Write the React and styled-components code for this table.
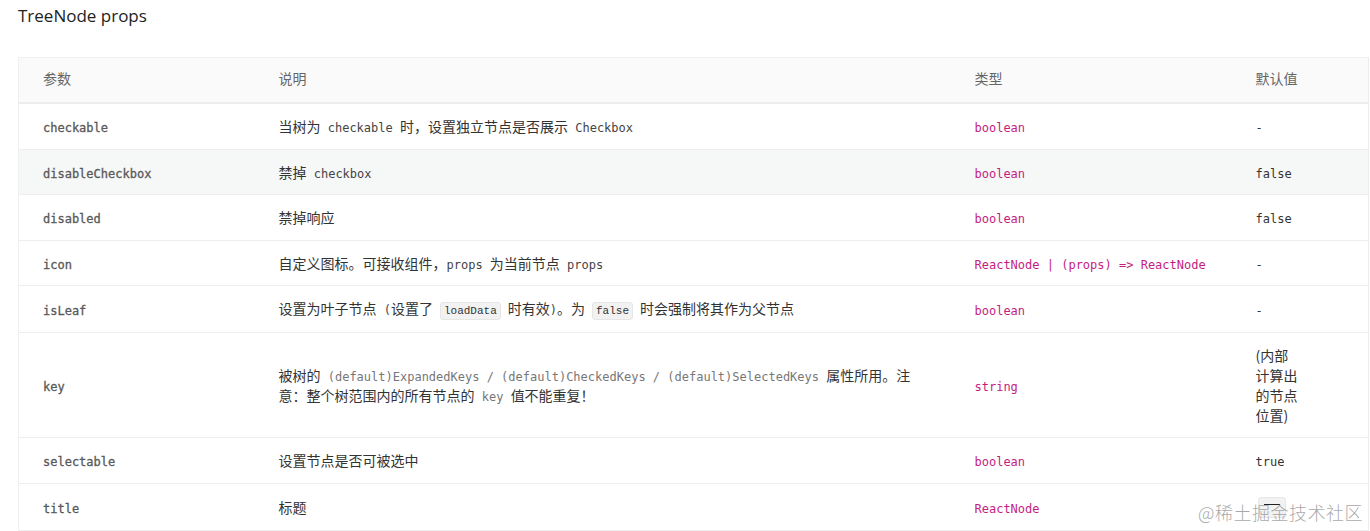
import React from "react";
import styled, { createGlobalStyle } from "styled-components";

const Global = createGlobalStyle`
  html, body { margin: 0; padding: 0; background: #fff; }
  body { font-family: "Noto Sans CJK SC", "Noto Sans", sans-serif; color: #333; }
`;

const Page = styled.div`
  position: relative;
  width: 1370px;
  height: 531px;
  overflow: hidden;
  padding: 0 1px 0 18px;
  box-sizing: border-box;
`;

const Title = styled.h3`
  margin: 0;
  padding-top: 4px;
  height: 53px;
  font-family: "Open Sans", "Noto Sans CJK SC", sans-serif;
  font-weight: 400;
  font-size: 17px;
  line-height: 24px;
  color: #222;
`;

const Table = styled.table`
  width: 100%;
  border-collapse: collapse;
  table-layout: fixed;
  border: 1px solid #f0f0f0;
  border-right-color: #ececec;
`;

const Th = styled.th`
  text-align: left;
  font-weight: 400;
  font-size: 14px;
  color: #666;
  background: #fafafa;
  padding: 10px 24px 13px;
  line-height: 21px;
  border-bottom: 2px solid #ededed;
`;

const Tr = styled.tr`
  background: ${(p) => (p.$hover ? "#f6f7f7" : "#fff")};
`;

const Td = styled.td`
  padding: 12px 24px;
  line-height: 20.5px;
  font-size: 14px;
  vertical-align: middle;
  border-bottom: 1px solid #eeeeee;
  color: #333;
`;

const mono = `"DejaVu Sans Mono", "Liberation Mono", "Noto Sans CJK SC", monospace`;

const Param = styled.span`
  font-family: ${mono};
  font-size: 12px;
  line-height: 1;
  color: #595959;
  -webkit-text-stroke: 0.3px #595959;
`;

const Inline = styled.span`
  font-family: ${mono};
  font-size: 12px;
  line-height: 1;
  white-space: pre-wrap;
  color: ${(p) => (p.$light ? "#777" : "#444")};
`;

const Type = styled.span`
  font-family: ${mono};
  font-size: 12px;
  line-height: 1;
  color: #c41d7f;
`;

const Def = styled.span`
  font-family: ${mono};
  font-size: 12px;
  line-height: 1;
  color: #333;
`;

const Narrow = styled.div`
  width: 44px;
  font-size: 14px;
  line-height: 20px;
  color: #333;
`;

const Code = styled.code`
  display: inline-block;
  font-family: "Liberation Mono", monospace;
  font-size: 11px;
  line-height: 16px;
  padding: 0 3px;
  margin: 0 7px;
  background: #f2f2f2;
  border: 1px solid #e6e6e6;
  border-radius: 3px;
  color: #333;
`;

const EmptyCode = styled.span`
  display: inline-block;
  width: 26px;
  height: 19px;
  margin-left: 2px;
  background: #f2f2f2;
  border: 1px solid #e6e6e6;
  border-radius: 3px;
  vertical-align: middle;
  position: relative;
  &::after {
    content: "";
    position: absolute;
    left: 5px;
    right: 5px;
    top: 6px;
    height: 1px;
    background: #222;
  }
`;

const Watermark = styled.div`
  position: absolute;
  right: 7px;
  bottom: 6px;
  font-size: 18px;
  line-height: 26px;
  color: rgba(140, 140, 140, 0.75);
  font-family: "Noto Sans CJK SC", sans-serif;
  font-weight: 300;
  letter-spacing: 0.5px;
  pointer-events: none;
`;

const rows = [
  {
    k: "checkable",
    d: (
      <>
        当树为<Inline> checkable </Inline>时，设置独立节点是否展示<Inline> Checkbox</Inline>
      </>
    ),
    t: "boolean",
    v: <Def>-</Def>,
  },
  {
    k: "disableCheckbox",
    d: (
      <>
        禁掉<Inline> checkbox</Inline>
      </>
    ),
    t: "boolean",
    v: <Def>false</Def>,
    hover: true,
  },
  { k: "disabled", d: "禁掉响应", t: "boolean", v: <Def>false</Def> },
  {
    k: "icon",
    d: (
      <>
        自定义图标。可接收组件，<Inline>props </Inline>为当前节点<Inline> props</Inline>
      </>
    ),
    t: "ReactNode | (props) => ReactNode",
    v: <Def>-</Def>,
  },
  {
    k: "isLeaf",
    d: (
      <>
        设置为叶子节点<Inline> (</Inline>设置了<Code>loadData</Code>时有效<Inline>)</Inline>。为<Code>false</Code>时会强制将其作为父节点
      </>
    ),
    t: "boolean",
    v: <Def>-</Def>,
  },
  {
    k: "key",
    d: (
      <>
        被树的<Inline $light> (default)ExpandedKeys / (default)CheckedKeys / (default)SelectedKeys </Inline>属性所用。注意：整个树范围内的所有节点的<Inline $light> key </Inline>值不能重复！
      </>
    ),
    t: "string",
    v: <Narrow>(内部计算出的节点位置)</Narrow>,
  },
  { k: "selectable", d: "设置节点是否可被选中", t: "boolean", v: <Def>true</Def> },
  { k: "title", d: "标题", t: "ReactNode", v: <EmptyCode /> },
];

export default function App() {
  return (
    <Page>
      <Global />
      <Title>TreeNode props</Title>
      <Table>
        <colgroup>
          <col style={{ width: 236 }} />
          <col style={{ width: 696 }} />
          <col style={{ width: 281 }} />
          <col />
        </colgroup>
        <thead>
          <tr>
            <Th>参数</Th>
            <Th>说明</Th>
            <Th>类型</Th>
            <Th>默认值</Th>
          </tr>
        </thead>
        <tbody>
          {rows.map((r) => (
            <Tr key={r.k} $hover={r.hover}>
              <Td>
                <Param>{r.k}</Param>
              </Td>
              <Td>{r.d}</Td>
              <Td>
                <Type>{r.t}</Type>
              </Td>
              <Td>{r.v}</Td>
            </Tr>
          ))}
        </tbody>
      </Table>
      <Watermark>@稀土掘金技术社区</Watermark>
    </Page>
  );
}
